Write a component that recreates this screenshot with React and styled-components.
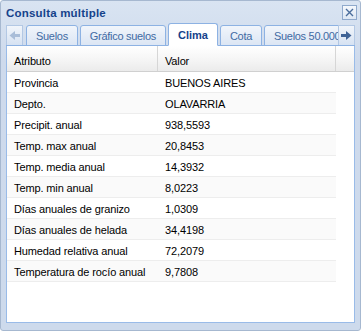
import React from 'react';
import styled, { createGlobalStyle } from 'styled-components';

const rows = [
    ['Provincia', 'BUENOS AIRES'],
    ['Depto.', 'OLAVARRIA'],
    ['Precipit. anual', '938,5593'],
    ['Temp. max anual', '20,8453'],
    ['Temp. media anual', '14,3932'],
    ['Temp. min anual', '8,0223'],
    ['Días anuales de granizo', '1,0309'],
    ['Días anuales de helada', '34,4198'],
    ['Humedad relativa anual', '72,2079'],
    ['Temperatura de rocío anual', '9,7808'],
];

const tabs = ['Suelos', 'Gráfico suelos', 'Clima', 'Cota', 'Suelos 50.000'];

function Arrow({ dir, color }) {
    return (
        <svg width="11" height="9" viewBox="0 0 11 9">
            <g transform={dir === 'left' ? 'translate(11 0) scale(-1 1)' : undefined} fill={color}>
                <rect x="0" y="3" width="6" height="3" />
                <polygon points="5,0 10.5,4.5 5,9" />
            </g>
        </svg>
    );
}

function ConsultaWindow() {
    return (
        <Frame>
            <Header>
                <Title>Consulta múltiple</Title>
                <CloseTool>
                    <svg width="9" height="9" viewBox="0 0 9 9">
                        <path d="M1 1 L8 8 M8 1 L1 8" stroke="#4a6d9c" strokeWidth="1.4" />
                    </svg>
                </CloseTool>
            </Header>
            <TabStrip>
                <Scroller>
                    <Arrow dir="left" color="#a9bdd8" />
                </Scroller>
                <TabList>
                    {tabs.map((t) => (
                        <Tab key={t} $active={t === 'Clima'}>{t}</Tab>
                    ))}
                </TabList>
                <Scroller>
                    <Arrow dir="right" color="#3f6396" />
                </Scroller>
            </TabStrip>
            <Body>
                <GridHeader>
                    <HeaderCell $w={151}>Atributo</HeaderCell>
                    <HeaderCell $w={178}>Valor</HeaderCell>
                    <HeaderSpacer />
                </GridHeader>
                {rows.map(([k, v], i) => (
                    <Row key={k} $alt={i % 2 === 1}>
                        <Cell $w={151}>{k}</Cell>
                        <Cell $w={178}>{v}</Cell>
                    </Row>
                ))}
            </Body>
        </Frame>
    );
}

const GlobalStyle = createGlobalStyle`
    html, body {
        margin: 0;
        padding: 0;
        background: #ffffff;
    }
`;

const Frame = styled.div`
    box-sizing: border-box;
    width: 361px;
    height: 331px;
    display: flex;
    flex-direction: column;
    padding: 0 5px 7px;
    border: 1px solid #a6b8d0;
    border-radius: 3px;
    background: linear-gradient(#d9e4f2, #cedaec 60px, #cddaec);
    font-family: "Liberation Sans", Arial, sans-serif;
`;

const Header = styled.div`
    height: 22px;
    display: flex;
    align-items: center;
    justify-content: space-between;
    margin-right: -2px;
`;

const Title = styled.div`
    color: #15428b;
    font-weight: 700;
    font-size: 11.5px;
    letter-spacing: 0.2px;
    padding-top: 1px;
`;

const CloseTool = styled.div`
    box-sizing: border-box;
    width: 15px;
    height: 15px;
    display: flex;
    align-items: center;
    justify-content: center;
    border: 1px solid #8fa9cc;
    background: linear-gradient(#f5f8fc, #dde7f4);
`;

const TabStrip = styled.div`
    height: 23px;
    display: flex;
    align-items: flex-end;
    border-bottom: 1px solid #8db2e3;
    box-sizing: border-box;
`;

const Scroller = styled.div`
    box-sizing: border-box;
    width: 17px;
    height: 20px;
    display: flex;
    align-items: center;
    justify-content: center;
    border: 1px solid #b3c8e4;
    border-bottom: none;
    background: linear-gradient(#f1f5fb, #d6e2f2);
    flex: none;
`;

const TabList = styled.div`
    flex: 1;
    display: flex;
    align-items: flex-end;
    overflow: hidden;
    gap: 2px;
    padding-left: 3px;
    height: 23px;
    margin-bottom: -1px;
`;

const Tab = styled.div`
    box-sizing: border-box;
    flex: none;
    height: ${(p) => (p.$active ? '23px' : '21px')};
    padding: 0 9px;
    display: flex;
    align-items: center;
    padding-top: ${(p) => (p.$active ? '1px' : '0')};
    border: 1px solid #8db2e3;
    border-bottom-color: ${(p) => (p.$active ? '#ffffff' : '#8db2e3')};
    border-radius: 3px 3px 0 0;
    background: ${(p) => (p.$active ? '#ffffff' : 'linear-gradient(#f1f5fb, #dce6f4)')};
    color: ${(p) => (p.$active ? '#15428b' : '#416aa3')};
    font-weight: ${(p) => (p.$active ? 700 : 400)};
    font-size: 11px;
    letter-spacing: ${(p) => (p.$active ? '0' : '-0.3px')};
    white-space: nowrap;
`;

const Body = styled.div`
    flex: 1;
    background: #ffffff;
    border: 1px solid #99bbe8;
    border-top: none;
`;

const GridHeader = styled.div`
    height: 26px;
    display: flex;
    background: linear-gradient(#ffffff, #f4f4f4 60%, #ebebeb);
    border-bottom: 1px solid #d0d0d0;
    box-sizing: border-box;
`;

const HeaderCell = styled.div`
    box-sizing: border-box;
    width: ${(p) => p.$w}px;
    padding: 5px 0 0 7px;
    border-right: 1px solid #d6d6d6;
    color: #000000;
    font-size: 11px;
    letter-spacing: -0.15px;
    display: flex;
    align-items: center;
`;

const HeaderSpacer = styled.div`
    flex: 1;
`;

const Row = styled.div`
    box-sizing: border-box;
    width: 329px;
    height: 21px;
    display: flex;
    align-items: center;
    background: ${(p) => (p.$alt ? '#fafafa' : '#ffffff')};
    border-bottom: 1px solid #ededed;
`;

const Cell = styled.div`
    box-sizing: border-box;
    width: ${(p) => p.$w}px;
    padding: 1px 0 0 7px;
    color: #000000;
    font-size: 11px;
    letter-spacing: -0.12px;
    white-space: nowrap;
`;

export default function App() {
    return (
        <>
            <GlobalStyle />
            <ConsultaWindow />
        </>
    );
}
